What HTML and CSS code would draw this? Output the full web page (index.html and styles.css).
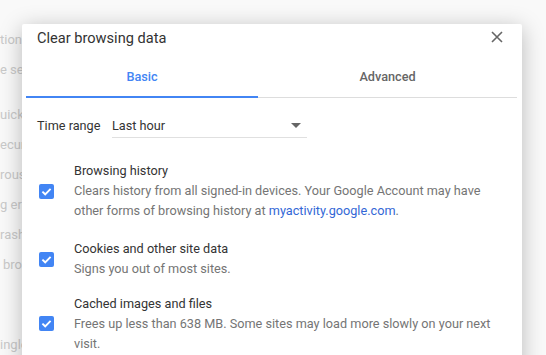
FILE: index.html
```html
<!DOCTYPE html>
<html lang="en">
<head>
    <meta charset="UTF-8">
    <title>Clear browsing data</title>
    <link rel="stylesheet" href="styles.css">
</head>
<body>
    <div class="settings-page">
        <div class="settings-line first">tion on</div>
        <div class="settings-line">e search</div>
        <div class="settings-line gap">uickly</div>
        <div class="settings-line">ecure</div>
        <div class="settings-line">rous</div>
        <div class="settings-line">g errors</div>
        <div class="settings-line">rashes</div>
        <div class="settings-line indent">brows</div>
        <div class="settings-line gap-lg">ingle</div>
    </div>

    <div class="dialog">
        <div class="dialog-header">
            <span class="dialog-title">Clear browsing data</span>
            <span class="dialog-close">
                <svg width="12" height="12" viewBox="0 0 12 12">
                    <path d="M1 1 L11 11 M11 1 L1 11" stroke="#666" stroke-width="1.6" fill="none"/>
                </svg>
            </span>
        </div>

        <div class="tabs">
            <div class="tab tab-basic active">Basic</div>
            <div class="tab tab-advanced">Advanced</div>
        </div>

        <div class="dialog-body">
            <div class="time-range">
                <span class="time-range-label">Time range</span>
                <div class="select">
                    <span class="select-text">Last hour</span>
                    <span class="select-arrow"></span>
                </div>
            </div>

            <div class="option option-history">
                <span class="checkbox">
                    <svg width="15" height="15" viewBox="0 0 15 15">
                        <path d="M3.4 7.6 L6.2 10.3 L11.6 4.8" stroke="#fff" stroke-width="1.9" fill="none"/>
                    </svg>
                </span>
                <div class="option-text">
                    <div class="option-label">Browsing history</div>
                    <div class="option-desc">Clears history from all signed-in devices. Your Google Account may have other forms of browsing history at <a href="#" class="link">myactivity.google.com</a>.</div>
                </div>
            </div>

            <div class="option option-cookies">
                <span class="checkbox">
                    <svg width="15" height="15" viewBox="0 0 15 15">
                        <path d="M3.4 7.6 L6.2 10.3 L11.6 4.8" stroke="#fff" stroke-width="1.9" fill="none"/>
                    </svg>
                </span>
                <div class="option-text">
                    <div class="option-label">Cookies and other site data</div>
                    <div class="option-desc">Signs you out of most sites.</div>
                </div>
            </div>

            <div class="option option-cache">
                <span class="checkbox">
                    <svg width="15" height="15" viewBox="0 0 15 15">
                        <path d="M3.4 7.6 L6.2 10.3 L11.6 4.8" stroke="#fff" stroke-width="1.9" fill="none"/>
                    </svg>
                </span>
                <div class="option-text">
                    <div class="option-label">Cached images and files</div>
                    <div class="option-desc cache-desc">Frees up less than 638 MB. Some sites may load more slowly on your next visit.</div>
                </div>
            </div>
        </div>
    </div>
</body>
</html>
```

FILE: styles.css
```css
html, body {
    margin: 0;
    padding: 0;
}
body {
    width: 546px;
    height: 355px;
    overflow: hidden;
    position: relative;
    background-color: #f9f9f9;
    font-family: Roboto, 'Liberation Sans', sans-serif;
}

/* Faded settings page behind the dialog */
.settings-page {
    padding-top: 30px;
    font-size: 13px;
    color: #c9c9c9;
    white-space: nowrap;
}
.settings-line {
    height: 30px;
    line-height: 20px;
}
.settings-line.gap {
    margin-top: 15px;
}
.settings-line.indent {
    padding-left: 3px;
}
.settings-line.gap-lg {
    margin-top: 50px;
}

/* Dialog */
.dialog {
    position: absolute;
    left: 22px;
    top: 24px;
    width: 500px;
    height: 360px;
    background-color: #ffffff;
    border-radius: 2px;
    box-shadow: 0 4px 22px rgba(0, 0, 0, 0.26);
}
.dialog-header {
    display: flex;
    justify-content: space-between;
    align-items: center;
    padding: 4px 19px 0 15px;
    height: 20px;
}
.dialog-title {
    font-size: 14.6px;
    color: #333333;
    line-height: 20px;
}
.dialog-close {
    display: flex;
    width: 12px;
    height: 12px;
    margin-top: -2px;
}

/* Tabs */
.tabs {
    display: flex;
    margin: 9px 5px 0 4px;
    border-bottom: 1px solid #dddddd;
}
.tab {
    height: 39px;
    line-height: 39px;
    text-align: center;
    font-size: 12.7px;
    font-weight: 500;
    color: #666666;
}
.tab-basic {
    width: 232px;
}
.tab-advanced {
    flex: 1;
}
.tab.active {
    color: #4285f4;
    border-bottom: 2px solid #4285f4;
    margin-bottom: -1px;
}

/* Body */
.dialog-body {
    padding: 15px 15px 0 15px;
}
.time-range {
    display: flex;
    align-items: center;
    height: 25px;
    font-size: 12.7px;
    color: #333333;
}
.time-range-label {
    width: 75px;
}
.select {
    display: flex;
    align-items: center;
    justify-content: space-between;
    width: 195px;
    height: 25px;
    border-bottom: 1px solid #e0e0e0;
    box-sizing: border-box;
    padding-right: 6px;
}
.select-arrow {
    width: 0;
    height: 0;
    border-left: 5px solid transparent;
    border-right: 5px solid transparent;
    border-top: 5px solid #666666;
}

.option {
    display: flex;
    align-items: center;
}
.option-history {
    margin-top: 23px;
}
.option-cookies {
    margin-top: 18px;
}
.option-cache {
    margin-top: 15px;
}
.checkbox {
    display: flex;
    width: 15px;
    height: 15px;
    margin-left: 2px;
    margin-right: 20px;
    background-color: #4285f4;
    border-radius: 2px;
    flex-shrink: 0;
}
.option-text {
    font-size: 12.7px;
    line-height: 20px;
}
.option-label {
    color: #333333;
}
.option-desc {
    color: #757575;
    width: 420px;
}
.cache-desc {
    line-height: 19.5px;
}
.link {
    color: #3367d6;
    text-decoration: none;
}
```
